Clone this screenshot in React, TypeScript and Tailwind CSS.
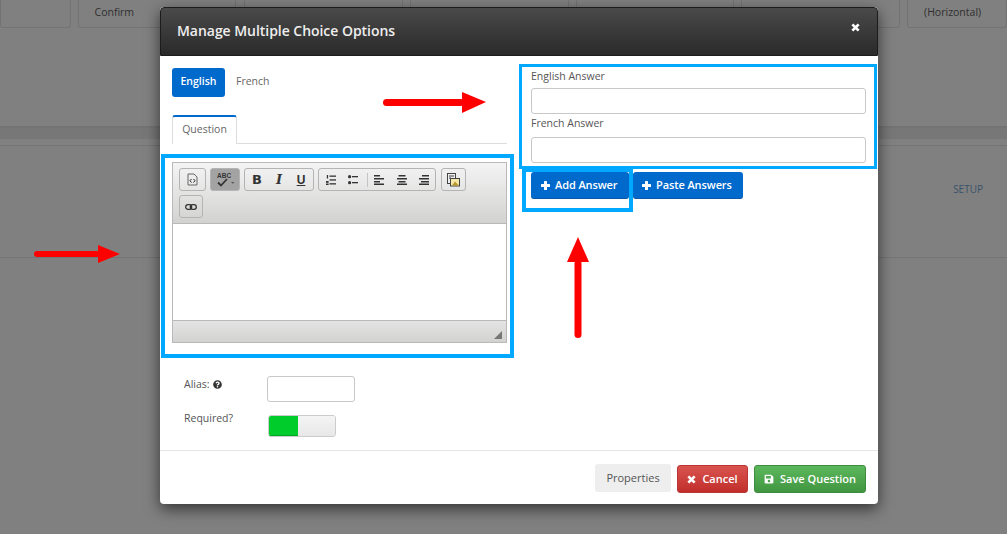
import React from "react";
import { FaSave, FaQuestionCircle } from "react-icons/fa";

const font = { fontFamily: '"Open Sans", sans-serif' };

const BackgroundCard = ({ label, className }: { label?: string; className: string }) => (
  <div className={`h-[28px] rounded-b-[3px] border border-t-0 border-[#737373] pl-4 pt-[5px] text-[10.5px] text-[#2f2f2f] ${className}`}>
    {label}
  </div>
);

const ToolButton = ({ children, className = "" }: { children: React.ReactNode; className?: string }) => (
  <div className={`flex h-[23px] items-center rounded-[3px] border border-[#b4b4b4] ${className}`}>
    {children}
  </div>
);

const PlusIcon = () => (
  <svg width="9" height="9" viewBox="0 0 9 9" fill="currentColor">
    <rect x="3" y="0" width="3" height="9" rx="0.5" />
    <rect x="0" y="3" width="9" height="3" rx="0.5" />
  </svg>
);

const CloseIcon = ({ size }: { size: number }) => (
  <svg width={size} height={size} viewBox="0 0 10 10" fill="none" stroke="currentColor" strokeWidth="3">
    <path d="M1.500 1.500l7 7M8.500 1.500l-7 7" />
  </svg>
);

const Lines = ({ kind, className }: { kind: "left" | "center" | "right"; className: string }) => {
  const x = kind === "left" ? [0, 0, 0, 0] : kind === "center" ? [1.5, 0, 1.5, 0] : [3, 0, 2, 0];
  const w = kind === "left" ? [6, 10, 6, 10] : kind === "center" ? [7, 10, 7, 10] : [7, 10, 8, 10];
  return (
    <svg className={className} width="10" height="10" viewBox="0 0 10 10">
      {[0, 3, 6, 8.5].map((y, i) => (
        <rect key={y} x={x[i]} y={y} width={w[i]} height="1.500" fill="#333" />
      ))}
    </svg>
  );
};

const Toolbar = () => (
  <div className="h-[61px] border-b border-[#b9b9b9] bg-gradient-to-b from-[#f4f4f4] to-[#d2d3d1] pl-[6px] pt-[5px]">
    <div className="flex gap-[4px]">
      <ToolButton className="w-[27px] justify-center">
        <svg width="11" height="13" viewBox="0 0 11 13" fill="none" stroke="#666" strokeWidth="1">
          <path d="M1 1h6l3 3v8H1z" />
          <path d="M4.500 6L3 7.700 4.500 9.500M6.500 6L8 7.700 6.500 9.500" stroke="#222" />
        </svg>
      </ToolButton>
      <ToolButton className="w-[30px] justify-center border-[#8e8e8e] bg-[#a3a3a3]">
        <div className="relative h-[18px] w-[24px]">
          <span className="absolute left-[4px] top-[1px] text-[6.5px] font-bold leading-[8px] text-[#333]" style={{ fontFamily: '"Liberation Sans", sans-serif' }}>
            ABC
          </span>
          <svg className="absolute left-[4px] top-[7px]" width="20" height="10" viewBox="0 0 20 10" fill="none">
            <path d="M1 4.500l3 3L10 1" stroke="#333" strokeWidth="1.800" />
            <path d="M14 4h3.500l-1.750 1.700z" fill="#555" />
          </svg>
        </div>
      </ToolButton>
      <ToolButton className="w-[70px] pl-[1px] text-[#333]">
        <span className="w-[22px] text-center text-[13px] font-bold" style={{ fontFamily: '"DejaVu Sans", sans-serif' }}>B</span>
        <span className="w-[22px] text-center text-[13px] font-bold italic" style={{ fontFamily: '"DejaVu Serif", serif' }}>I</span>
        <span className="w-[22px] text-center text-[12px] font-bold underline" style={{ fontFamily: '"Liberation Sans", sans-serif' }}>U</span>
      </ToolButton>
      <ToolButton className="w-[118px] pl-[7px]">
        <svg width="10" height="10" viewBox="0 0 10 10" fill="#333">
          <rect x="3.500" y="0.500" width="6.500" height="1.300" />
          <rect x="3.500" y="4.300" width="6.500" height="1.300" />
          <rect x="3.500" y="8.200" width="6.500" height="1.300" />
          <rect x="0.800" y="0" width="1.300" height="3.500" />
          <rect x="0" y="6" width="2.600" height="1.800" />
          <rect x="0" y="8.500" width="2.600" height="1.500" />
        </svg>
        <svg className="ml-[12px]" width="10" height="10" viewBox="0 0 10 10" fill="#333">
          <rect x="4" y="1" width="6" height="1.300" />
          <rect x="4" y="7" width="6" height="1.300" />
          <circle cx="1.600" cy="1.700" r="1.600" />
          <circle cx="1.600" cy="7.700" r="1.600" />
        </svg>
        <div className="ml-[9px] h-[14px] w-px bg-[#c4c4c4]" />
        <Lines className="ml-[6px]" kind="left" />
        <Lines className="ml-[13px]" kind="center" />
        <Lines className="ml-[12px]" kind="right" />
      </ToolButton>
      <ToolButton className="ml-[1px] w-[25px] justify-center">
        <svg width="13" height="14" viewBox="0 0 13 14">
          <rect x="0.500" y="0.500" width="8" height="10" fill="#eee" stroke="#444" />
          <path d="M2 3h5M2 5h2" stroke="#444" />
          <rect x="3.500" y="5.500" width="9" height="7.500" fill="#f6e9a8" stroke="#444" />
          <path d="M5 12.500l3-4 2 2 2 2z" fill="#b89a2c" />
        </svg>
      </ToolButton>
    </div>
    <ToolButton className="mt-[4px] w-[24px] justify-center">
      <svg width="12" height="6" viewBox="0 0 12 6" fill="none" stroke="#333" strokeWidth="1.300">
        <rect x="0.700" y="0.700" width="6" height="4.600" rx="2.300" />
        <rect x="5.300" y="0.700" width="6" height="4.600" rx="2.300" />
      </svg>
    </ToolButton>
  </div>
);

const Editor = () => (
  <div className="mt-[18px] border border-[#b9b9b9]">
    <Toolbar />
    <div className="h-[97px] border-b border-[#b9b9b9] bg-white" />
    <div className="relative h-[21px] bg-gradient-to-b from-[#e4e4e4] to-[#d2d3d1]">
      <div className="absolute bottom-[3px] right-[4px] h-0 w-0 border-b-[8px] border-l-[8px] border-b-[#777] border-l-transparent" />
    </div>
  </div>
);

const AnswerField = ({ label, className }: { label: string; className: string }) => (
  <div>
    <div className={`text-[10.5px] leading-[18px] text-[#555] ${className}`}>{label}</div>
    <div className="h-[26px] w-[335px] rounded-[3px] border border-[#c8c8c8] bg-white" />
  </div>
);

const PrimaryButton = ({ label, className }: { label: string; className: string }) => (
  <div className={`flex h-[27px] items-center gap-[5px] rounded-[3px] border-b border-[#0a57a5] bg-[#0069cc] text-[11px] font-semibold tracking-[-0.1px] text-white ${className}`}>
    <PlusIcon />
    {label}
  </div>
);

const Arrow = ({ className, points, shaft }: { className: string; points: string; shaft: React.ReactNode }) => (
  <svg className={`absolute ${className}`} fill="#ff0000">
    {shaft}
    <polygon points={points} />
  </svg>
);

export default function App() {
  return (
    <div className="relative h-[534px] w-[1007px] overflow-hidden bg-[#808080]" style={font}>
      {/* page behind the dialog */}
      <div className="flex gap-[7px]">
        <BackgroundCard className="w-[71px]" />
        <BackgroundCard className="w-[160px]" label="Confirm" />
        <BackgroundCard className="ml-[1px] w-[160px]" />
        <BackgroundCard className="w-[160px]" />
        <BackgroundCard className="w-[160px]" />
        <BackgroundCard className="w-[160px]" />
        <BackgroundCard className="w-[100px] shrink-0" label="(Horizontal)" />
      </div>
      <div className="mt-[98px] h-[2px] bg-[#737373]" />
      <div className="h-[11px] bg-[#777777]" />
      <div className="mt-[6px] flex h-[113px] justify-end border-y border-[#757575] pr-[24px] pt-[36px]">
        <span className="text-[10px] leading-[15px] text-[#38536b]">SETUP</span>
      </div>

      {/* dialog */}
      <div className="absolute left-[160px] top-[7px] flex h-[497px] w-[718px] flex-col rounded-[4px] bg-white shadow-[0_5px_15px_rgba(0,0,0,0.6)]">
        <div className="flex h-[49px] shrink-0 items-start justify-between rounded-t-[4px] border border-[#1c1c1c] bg-gradient-to-b from-[#4a4a4a] to-[#2a2a2a] pl-[16px] pr-[17px]">
          <span className="pt-[13px] text-[14px] font-semibold leading-[20px] tracking-[-0.04px] text-[#eeeeee]">Manage Multiple Choice Options</span>
          <div className="pt-[15px] text-white">
            <CloseIcon size={9} />
          </div>
        </div>

        <div className="flex flex-1">
          <div className="w-[347px] pl-[12px]">
            <div className="mt-[12px] flex items-center">
              <div className="flex h-[29px] w-[53px] items-center justify-center rounded-[3px] bg-[#0069cc] pb-[2px] text-[10.5px] font-semibold text-white">English</div>
              <span className="pb-[2px] pl-[11px] text-[10.5px] text-[#666]">French</span>
            </div>
            <div className="mt-[18px] h-[29px] w-[335px] border-b border-[#dddddd]">
              <div className="flex h-[29px] w-[65px] items-center justify-center rounded-t-[3px] border-x border-t-2 border-[#dddddd] border-t-[#0069cc] bg-white pb-[2px] text-[10.5px] text-[#666]">Question</div>
            </div>
            <Editor />

            <div className="mt-[33px] flex">
              <div className="flex w-[95px] items-start gap-[3px] pl-[12px] pt-[1px] text-[10.5px] leading-[14px] text-[#555]">
                Alias:
                <FaQuestionCircle className="mt-[3px] h-[9px] w-[9px] text-[#333]" />
              </div>
              <div className="h-[26px] w-[88px] rounded-[3px] border border-[#c8c8c8] bg-white" />
            </div>
            <div className="mt-[13px] flex">
              <div className="-mt-[4px] w-[96px] pl-[12px] text-[10.5px] leading-[14px] text-[#555]">Required?</div>
              <div className="flex h-[22px] w-[68px] overflow-hidden rounded-[3px] border border-[#cccccc]">
                <div className="w-[29px] border-b border-[#00a824] bg-[#00cc2c]" />
                <div className="flex-1 bg-gradient-to-b from-[#f4f4f4] to-[#e8e8e8]" />
              </div>
            </div>
          </div>

          <div className="pl-[24px] pt-[11px]">
            <AnswerField className="h-[21px]" label="English Answer" />
            <AnswerField className="h-[23px]" label="French Answer" />
            <div className="mt-[9px] flex gap-[4px]">
              <PrimaryButton className="w-[98px] pl-[10px]" label="Add Answer" />
              <PrimaryButton className="w-[110px] pl-[9px]" label="Paste Answers" />
            </div>
          </div>
        </div>

        <div className="flex h-[54px] shrink-0 items-start justify-end gap-[6px] border-t border-[#e5e5e5] pr-[12px] pt-[13px]">
          <div className="flex h-[28px] w-[76px] items-center justify-center rounded-[3px] bg-[#eeeeee] text-[11px] text-[#555]">Properties</div>
          <div className="mt-[1px] flex h-[28px] w-[71px] items-center justify-center gap-[6px] rounded-[3px] border border-[#b93434] bg-gradient-to-b from-[#d9534f] to-[#c12e2a] text-[11px] font-semibold text-white">
            <CloseIcon size={9} />
            Cancel
          </div>
          <div className="mt-[1px] flex h-[28px] w-[112px] items-center justify-center gap-[6px] rounded-[3px] border border-[#3d8b3d] bg-gradient-to-b from-[#5cb85c] to-[#419641] text-[11px] font-semibold text-white">
            <FaSave className="h-[10px] w-[10px]" />
            Save Question
          </div>
        </div>
      </div>

      {/* annotations drawn over the screenshot */}
      <div className="absolute left-[161px] top-[154px] h-[204px] w-[353px] border-4 border-[#00a8ff]" />
      <div className="absolute left-[519px] top-[64px] h-[105px] w-[358px] border-[3px] border-[#00a8ff]" />
      <div className="absolute left-[522px] top-[168px] h-[44px] w-[111px] border-[4px] border-[#00a8ff]" />
      <Arrow
        className="left-[382px] top-[91px] h-[24px] w-[105px]"
        points="80,1 104,11 80,22"
        shaft={<rect x="1" y="8" width="81" height="7" rx="3.500" />}
      />
      <Arrow
        className="left-[33px] top-[244px] h-[20px] w-[88px]"
        points="65,1 87,10 65,19"
        shaft={<rect x="1" y="7" width="66" height="6" rx="3" />}
      />
      <Arrow
        className="left-[566px] top-[236px] h-[103px] w-[24px]"
        points="12,1 23,26 1,26"
        shaft={<rect x="8.500" y="24" width="7" height="78" rx="3.500" />}
      />
    </div>
  );
}
